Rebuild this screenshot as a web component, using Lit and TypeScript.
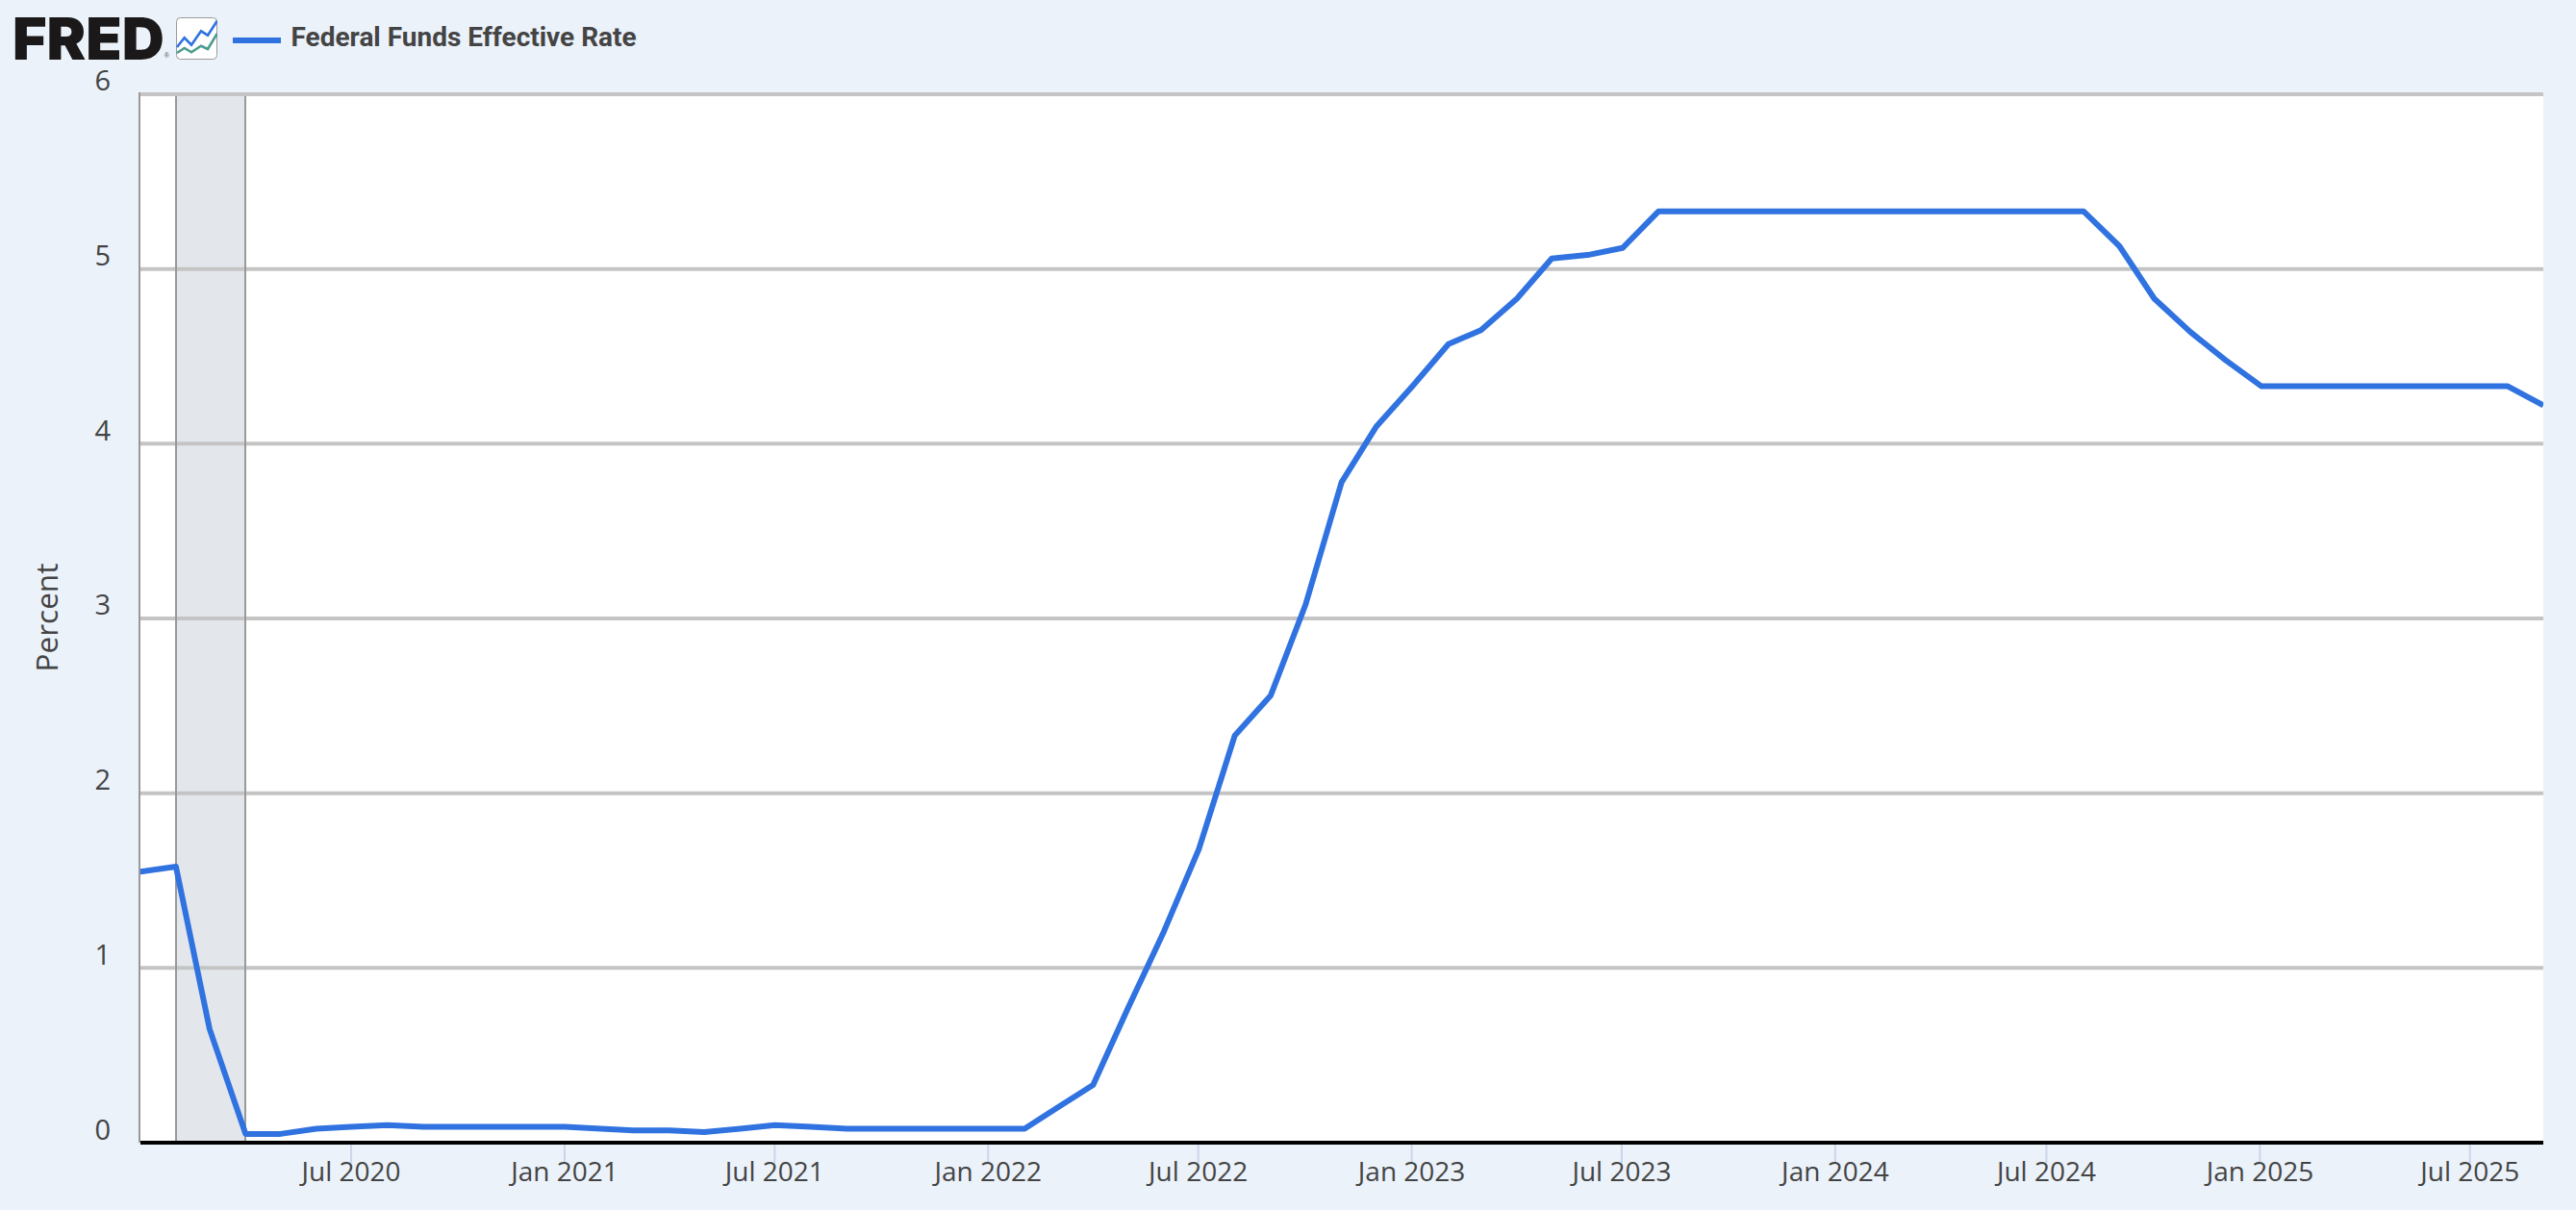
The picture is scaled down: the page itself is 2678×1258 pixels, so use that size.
import { LitElement, html, svg, css } from "lit";
import { customElement } from "lit/decorators.js";

const VALUES: number[] = [
  1.55, 1.58, 0.65, 0.05, 0.05, 0.08, 0.09, 0.10, 0.09, 0.09, 0.09, 0.09,
  0.09, 0.08, 0.07, 0.07, 0.06, 0.08, 0.10, 0.09, 0.08, 0.08, 0.08, 0.08,
  0.08, 0.08, 0.20, 0.33, 0.77, 1.21, 1.68, 2.33, 2.56, 3.08, 3.78, 4.10,
  4.33, 4.57, 4.65, 4.83, 5.06, 5.08, 5.12, 5.33, 5.33, 5.33, 5.33, 5.33,
  5.33, 5.33, 5.33, 5.33, 5.33, 5.33, 5.33, 5.33, 5.13, 4.83, 4.64, 4.48,
  4.33, 4.33, 4.33, 4.33, 4.33, 4.33, 4.33, 4.33, 4.22,
];

const X0 = 145.5;
const Y0 = 1188;
const UNIT = 181.67;
const RIGHT = 2644;
const DAY_MS = 86400000;
const START = Date.UTC(2020, 0, 1);

const days = (y: number, m: number) => (Date.UTC(y, m, 1) - START) / DAY_MS;
const dataX = (i: number) => X0 + days(2020, i) * 1.207;
const valueY = (v: number) => Y0 - v * UNIT;
const tickX = (y: number, m: number) => X0 + days(y, m) * 1.2063;

const TICKS: Array<[string, number, number]> = [];
for (let y = 2020; y <= 2025; y++) {
  if (y > 2020) TICKS.push([`Jan ${y}`, y, 0]);
  TICKS.push([`Jul ${y}`, y, 6]);
}

@customElement("fred-chart")
export class FredChart extends LitElement {
  static styles = css`
    :host { display: block; }
    svg { display: block; }
    .plot { fill: #ffffff; }
    .band { fill: #e3e7ec; }
    .grid { stroke: #c4c4c4; stroke-width: 4; }
    .edge { stroke: #999999; stroke-width: 2; }
    .axis { stroke: #000000; stroke-width: 4; }
    .tick { stroke: #ccd6eb; stroke-width: 2; }
    .series { fill: none; stroke: #2f72e0; stroke-width: 6; stroke-linejoin: round; }
    text { font-family: "Open Sans", sans-serif; font-size: 28px; fill: #444444; }
    .ylab { text-anchor: end; font-size: 29px; }
    .xlab { text-anchor: middle; }
    .title { font-size: 31.5px; text-anchor: middle; }
  `;

  render() {
    const pts = VALUES.map((v, i) => `${dataX(i).toFixed(1)},${valueY(v).toFixed(1)}`).join(" ");
    return html`
      <svg width="2678" height="1192" viewBox="0 66 2678 1192">
        <defs>
          <clipPath id="plot-clip"><rect x="146" y="96" width="2498" height="1090"></rect></clipPath>
        </defs>
        <rect class="plot" x="145" y="96" width="2499" height="1092"></rect>
        <rect class="band" x="183" y="96" width="72" height="1092"></rect>
        ${[1, 2, 3, 4, 5, 6].map(
          (n) => svg`<line class="grid" x1="146" x2=${RIGHT} y1=${valueY(n)} y2=${valueY(n)}></line>`
        )}
        <line class="edge" x1="145" x2="145" y1="96" y2="1188"></line>
        <line class="edge" x1="183" x2="183" y1="100" y2="1188"></line>
        <line class="edge" x1="255" x2="255" y1="100" y2="1188"></line>
        <polyline class="series" clip-path="url(#plot-clip)" points=${pts}></polyline>
        <line class="axis" x1="146" x2=${RIGHT} y1="1188" y2="1188"></line>
        ${TICKS.map(
          ([label, y, m]) => svg`
            <line class="tick" x1=${tickX(y, m)} x2=${tickX(y, m)} y1="1190" y2="1209"></line>
            <text class="xlab" x=${tickX(y, m)} y="1228">${label}</text>`
        )}
        ${[0, 1, 2, 3, 4, 5, 6].map(
          (n) => svg`<text class="ylab" x="115" y=${valueY(n) - 3.5}>${n}</text>`
        )}
        <text class="title" transform="translate(60 642) rotate(-90)">Percent</text>
      </svg>
    `;
  }
}

@customElement("app-root")
export class AppRoot extends LitElement {
  static styles = css`
    :host { display: block; width: 2678px; height: 1258px; background: #ebf2fa; overflow: hidden; }
    .header { display: flex; align-items: flex-start; height: 66px; box-sizing: border-box; padding: 18px 0 0 16px; }
    .logo { display: flex; align-items: center; width: 167px; height: 44px; flex: none; color: #1a1818; }
    .word {
      font-family: "Inter", "Liberation Sans", sans-serif;
      font-weight: 900;
      font-size: 61px;
      line-height: 61px;
      margin-left: -3px;
      flex: none;
    }
    .reg { align-self: flex-end; font-family: "Liberation Sans", sans-serif; font-size: 7px; line-height: 8px; color: #555; }
    .icon { display: block; flex: none; }
    .key { width: 50px; height: 6px; margin: 21px 10.5px 0 16px; background: #2f72e0; flex: none; }
    .label {
      font-family: "Roboto", sans-serif;
      font-weight: 700;
      font-size: 28px;
      line-height: 32px;
      margin-top: 5px;
      color: #444444;
    }
  `;

  render() {
    return html`
      <div class="header">
        <div class="logo"><span class="word">FRED</span><span class="reg">®</span></div>
        <svg class="icon" width="43" height="44" viewBox="183 18 43 44">
          <rect x="183.5" y="18.5" width="42" height="43" rx="4" fill="#ffffff" stroke="#9a9a9a"></rect>
          <polyline points="184,55 191.7,50 199,54.3 209,47.7 216,51 225.7,35" fill="none" stroke="#4a9d8f" stroke-width="2.6"></polyline>
          <polyline points="184,49 191.7,39.3 199,46.7 209,32.3 216,36.7 225.7,21.7" fill="none" stroke="#2f72e0" stroke-width="2.6"></polyline>
        </svg>
        <div class="key"></div>
        <div class="label">Federal Funds Effective Rate</div>
      </div>
      <fred-chart></fred-chart>
    `;
  }
}
